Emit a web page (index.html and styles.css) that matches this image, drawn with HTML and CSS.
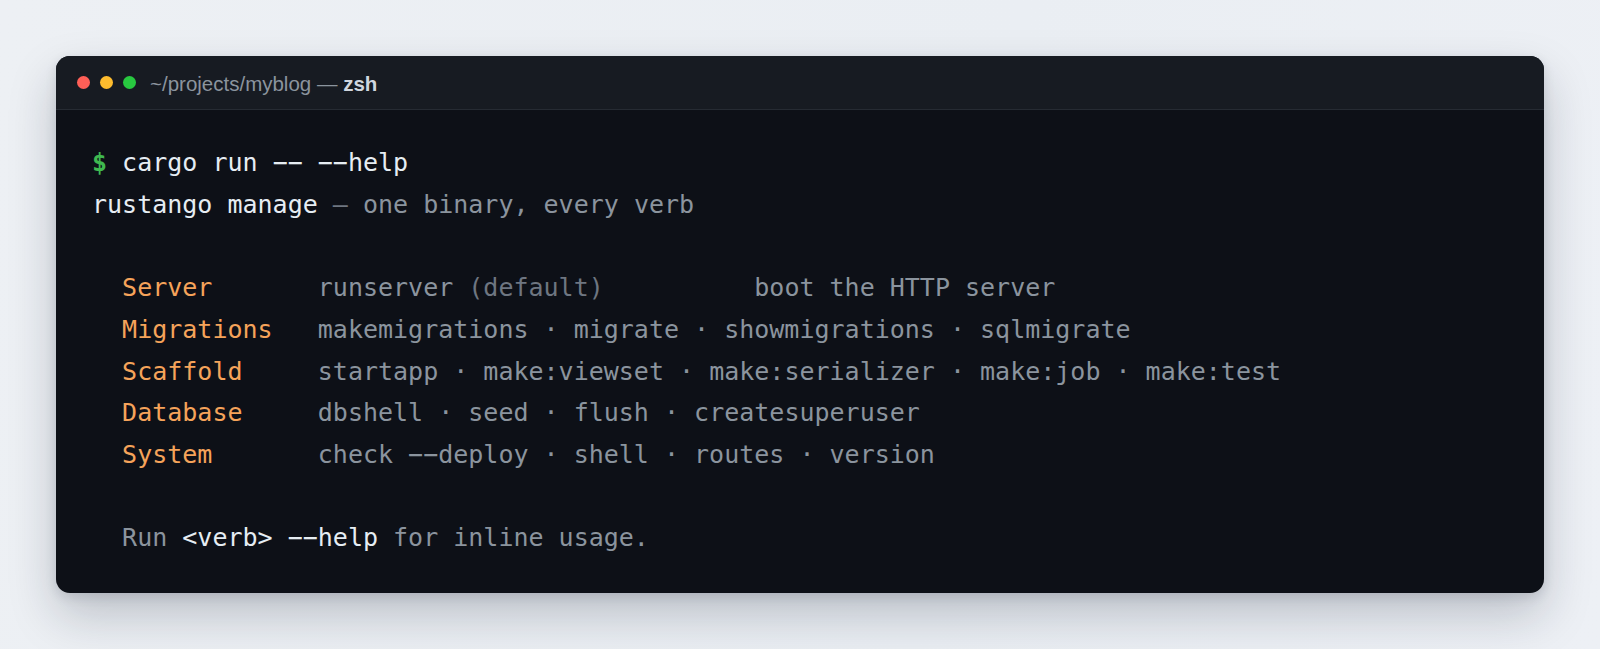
FILE: index.html
```html
<!DOCTYPE html>
<html lang="en">
<head>
<meta charset="utf-8">
<title>rustango manage</title>
<link rel="stylesheet" href="styles.css">
</head>
<body>
<div class="window">
  <div class="titlebar">
    <div class="dots">
      <span class="dot red"></span>
      <span class="dot yellow"></span>
      <span class="dot green"></span>
    </div>
    <div class="title">~/projects/myblog — <b>zsh</b></div>
  </div>
<pre class="term"><span class="prompt">$</span> cargo run −− −−help
rustango manage <span class="dim">—</span> <span class="muted">one binary, every verb</span>

  <span class="label">Server</span>       <span class="muted">runserver <span class="dim">(default)</span>          boot the HTTP server</span>
  <span class="label">Migrations</span>   <span class="muted">makemigrations · migrate · showmigrations · sqlmigrate</span>
  <span class="label">Scaffold</span>     <span class="muted">startapp · make:viewset · make:serializer · make:job · make:test</span>
  <span class="label">Database</span>     <span class="muted">dbshell · seed · flush · createsuperuser</span>
  <span class="label">System</span>       <span class="muted">check −−deploy · shell · routes · version</span>

  <span class="muted">Run</span> &lt;verb&gt; −−help <span class="muted">for inline usage.</span></pre>
</div>
</body>
</html>
```

FILE: styles.css
```css
html, body {
  margin: 0;
  padding: 0;
}

body {
  padding: 56px;
  min-height: 649px;
  box-sizing: border-box;
  background: linear-gradient(100deg, #edf0f4 0%, #eaeef3 60%, #edf0f5 100%);
  font-family: "Liberation Sans", Arial, sans-serif;
}

.window {
  background: #0d1017;
  border-radius: 14px;
  overflow: hidden;
  box-shadow: 0 22px 48px rgba(20, 28, 45, 0.22), 0 4px 12px rgba(20, 28, 45, 0.12);
}

.titlebar {
  height: 53px;
  display: flex;
  align-items: center;
  padding: 0 21px;
  background: #171b22;
  border-bottom: 1px solid #262b33;
}

.dots {
  display: flex;
  gap: 10px;
}

.dot {
  width: 13px;
  height: 13px;
  border-radius: 50%;
  display: block;
}

.red { background: #ff5f57; }
.yellow { background: #febc2e; }
.green { background: #28c840; }

.title {
  margin-left: 14px;
  padding-top: 2px;
  font-size: 20.5px;
  color: #8b949e;
}

.title b {
  color: #d0d6de;
  font-weight: 700;
}

.term {
  margin: 0;
  padding: 32px 36px 34px;
  font-family: "DejaVu Sans Mono", monospace;
  font-size: 25px;
  line-height: 41.7px;
  color: #e6edf3;
  white-space: pre;
}

.prompt {
  color: #3fb950;
  font-weight: 700;
}
.dim { color: #6e7681; }
.muted { color: #8b949e; }
.label { color: #f5a35a; }
```
